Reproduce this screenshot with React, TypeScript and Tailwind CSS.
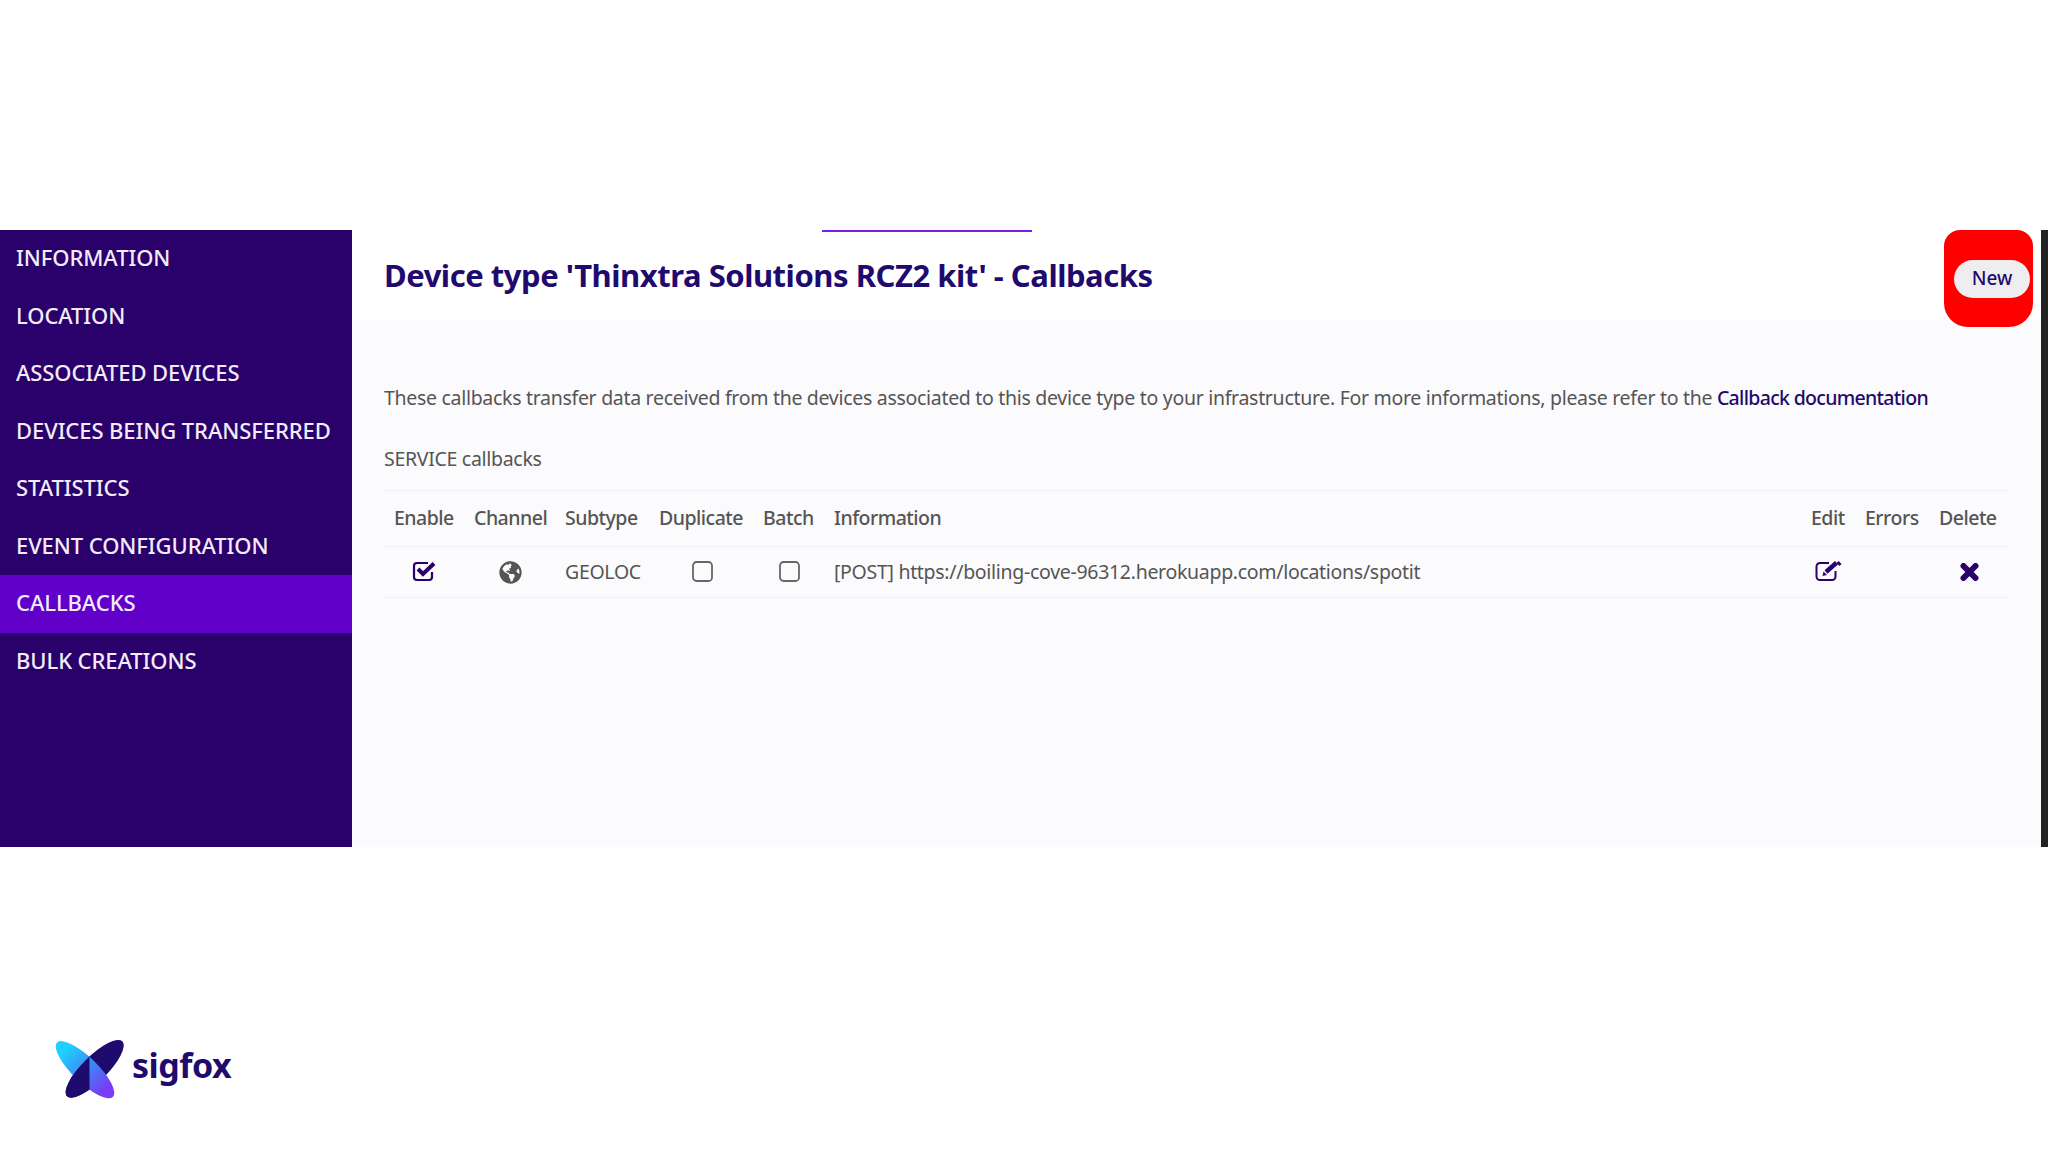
import React from 'react';
import { FaGlobeAmericas } from 'react-icons/fa';

const navItems = [
  'INFORMATION',
  'LOCATION',
  'ASSOCIATED DEVICES',
  'DEVICES BEING TRANSFERRED',
  'STATISTICS',
  'EVENT CONFIGURATION',
  'CALLBACKS',
  'BULK CREATIONS',
];

const rowGrid = 'grid grid-cols-[80px_91px_94px_104px_71px_977px_54px_74px_79px] items-center border-b border-[#f0eff2]';

const SigfoxLogo = () => (
  <svg width="80" height="70" viewBox="0 0 80 70" className="shrink-0">
    <defs>
      <linearGradient id="wing" gradientUnits="userSpaceOnUse" x1="7" y1="0" x2="63" y2="0">
        <stop offset="0" stopColor="#1fd0ff" />
        <stop offset="0.55" stopColor="#3f84f6" />
        <stop offset="1" stopColor="#7a3cf5" />
      </linearGradient>
      <clipPath id="left-half">
        <rect x="0" y="0" width="39.5" height="70" />
      </clipPath>
    </defs>
    <ellipse cx="44.7" cy="33.8" rx="39" ry="12.5" transform="rotate(-44.8 44.7 33.8)" fill="#1f0a6e" />
    <ellipse cx="35" cy="34.7" rx="39" ry="12.5" transform="rotate(44.2 35 34.7)" fill="url(#wing)" />
    <g clipPath="url(#left-half)">
      <ellipse cx="44.7" cy="33.8" rx="39" ry="12.5" transform="rotate(-44.8 44.7 33.8)" fill="#1f0a6e" />
    </g>
  </svg>
);

const CheckedBox = () => (
  <svg width="25" height="22" viewBox="0 0 25 22" fill="none" className="text-[#2a006b]">
    <path d="M16 3H5a3 3 0 0 0-3 3v11a3 3 0 0 0 3 3h12a3 3 0 0 0 3-3v-5" stroke="currentColor" strokeWidth="2.2" />
    <path d="M6 9l5 5L22 3.5" stroke="currentColor" strokeWidth="4" />
  </svg>
);

const EmptyBox = () => (
  <svg width="21" height="21" viewBox="0 0 21 21" fill="none">
    <rect x="1" y="1" width="19" height="19" rx="3.5" stroke="#666" strokeWidth="1.8" />
  </svg>
);

const EditIcon = () => (
  <svg width="27" height="22" viewBox="0 0 27 22" fill="none" className="text-[#2a006b]">
    <path d="M14 3H5a3.500 3.500 0 0 0-3.500 3.500v10A3.500 3.500 0 0 0 5 20h12a3.500 3.500 0 0 0 3.500-3.500V11" stroke="currentColor" strokeWidth="2" />
    <path d="M11 12L21.500 2.800" stroke="currentColor" strokeWidth="4.500" />
    <path d="M22.500 2l3 3" stroke="currentColor" strokeWidth="3" />
    <path d="M7.500 16l1-4.500 3.500 3.500z" fill="currentColor" />
  </svg>
);

const DeleteIcon = () => (
  <svg width="19" height="18" viewBox="0 0 19 18" fill="none" className="text-[#2a006b]">
    <path d="M3.500 3l12 12M15.500 3l-12 12" stroke="currentColor" strokeWidth="6" strokeLinecap="round" />
  </svg>
);

export default function App() {
  return (
    <div className="min-h-[1152px] bg-white font-['Noto_Sans',sans-serif] text-[#555]">
      <div className="h-[230px]" />
      <div className="relative flex h-[617px]">
        <nav className="w-[352px] shrink-0 bg-[#2a006b]">
          {navItems.map((item) => (
            <div
              key={item}
              className={`flex h-[57.5px] items-center pl-4 pb-[2px] text-[22px] font-medium tracking-[-0.08px] text-[#f1ecf8] ${item === 'CALLBACKS' ? 'bg-[#6100c9]' : ''}`}
            >
              {item}
            </div>
          ))}
        </nav>

        <main className="flex min-w-0 flex-1 flex-col bg-[#fbfafc]">
          <header className="flex h-[90px] items-center bg-white pl-8">
            <h1 className="text-[31px] font-bold tracking-[-0.47px] text-[#1f0a6e]">
              Device type 'Thinxtra Solutions RCZ2 kit' - Callbacks
            </h1>
          </header>
          <div className="pl-8 pr-8">
            <p className="mt-[64px] text-[19.5px] leading-[28px] tracking-[-0.3px]">
              These callbacks transfer data received from the devices associated to this device type to your infrastructure. For more informations, please refer to the{' '}
              <span className="font-medium tracking-[-0.68px] text-[#1f0a6e]">Callback documentation</span>
            </p>
            <p className="mt-[33px] text-[19.5px] leading-[28px] tracking-[-0.3px]">SERVICE callbacks</p>

            <div className="mt-[17px] w-[1624px] border-t border-[#f0eff2] text-[19.5px] tracking-[-0.3px]">
              <div className={`${rowGrid} h-[56px] pb-[1px] font-medium tracking-[-0.5px]`}>
                {['Enable', 'Channel', 'Subtype', 'Duplicate', 'Batch', 'Information', 'Edit', 'Errors', 'Delete'].map((h) => (
                  <div key={h} className="pl-[10px]">{h}</div>
                ))}
              </div>
              <div className={`${rowGrid} h-[51px]`}>
                <div className="pl-[28px] pb-[2px]"><CheckedBox /></div>
                <div className="pl-[35px]"><FaGlobeAmericas size={23} /></div>
                <div className="pl-[10px]">GEOLOC</div>
                <div className="pl-[43px] pb-[2px]"><EmptyBox /></div>
                <div className="pl-[26px] pb-[2px]"><EmptyBox /></div>
                <div className="pl-[10px]">[POST] https://boiling-cove-96312.herokuapp.com/locations/spotit</div>
                <div className="pl-[14px] pb-[2px]"><EditIcon /></div>
                <div />
                <div className="pl-[31px]"><DeleteIcon /></div>
              </div>
            </div>
          </div>
        </main>

        <div className="w-[7px] shrink-0 bg-[#222]" />

        {/* progress line over the header */}
        <div className="absolute left-[822px] top-0 h-[2px] w-[210px] bg-[#7b1fe8]" />

        {/* red highlight round the New button */}
        <div className="absolute left-[1944px] top-0 flex h-[97px] w-[89px] items-center rounded-b-[24px] rounded-t-[16px] bg-[#ff0000]">
          <button className="ml-[10px] flex h-[38px] w-[76px] items-center justify-center rounded-full bg-[#eeeef0] text-[19px] font-medium text-[#1f0a6e]">
            New
          </button>
        </div>
      </div>

      <div className="flex items-center gap-[2px] pl-[50px] pt-[188px]">
        <SigfoxLogo />
        <span className="pb-[10px] text-[34px] font-bold leading-none tracking-[-0.5px] text-[#1f0a6e]">sigfox</span>
      </div>
    </div>
  );
}
